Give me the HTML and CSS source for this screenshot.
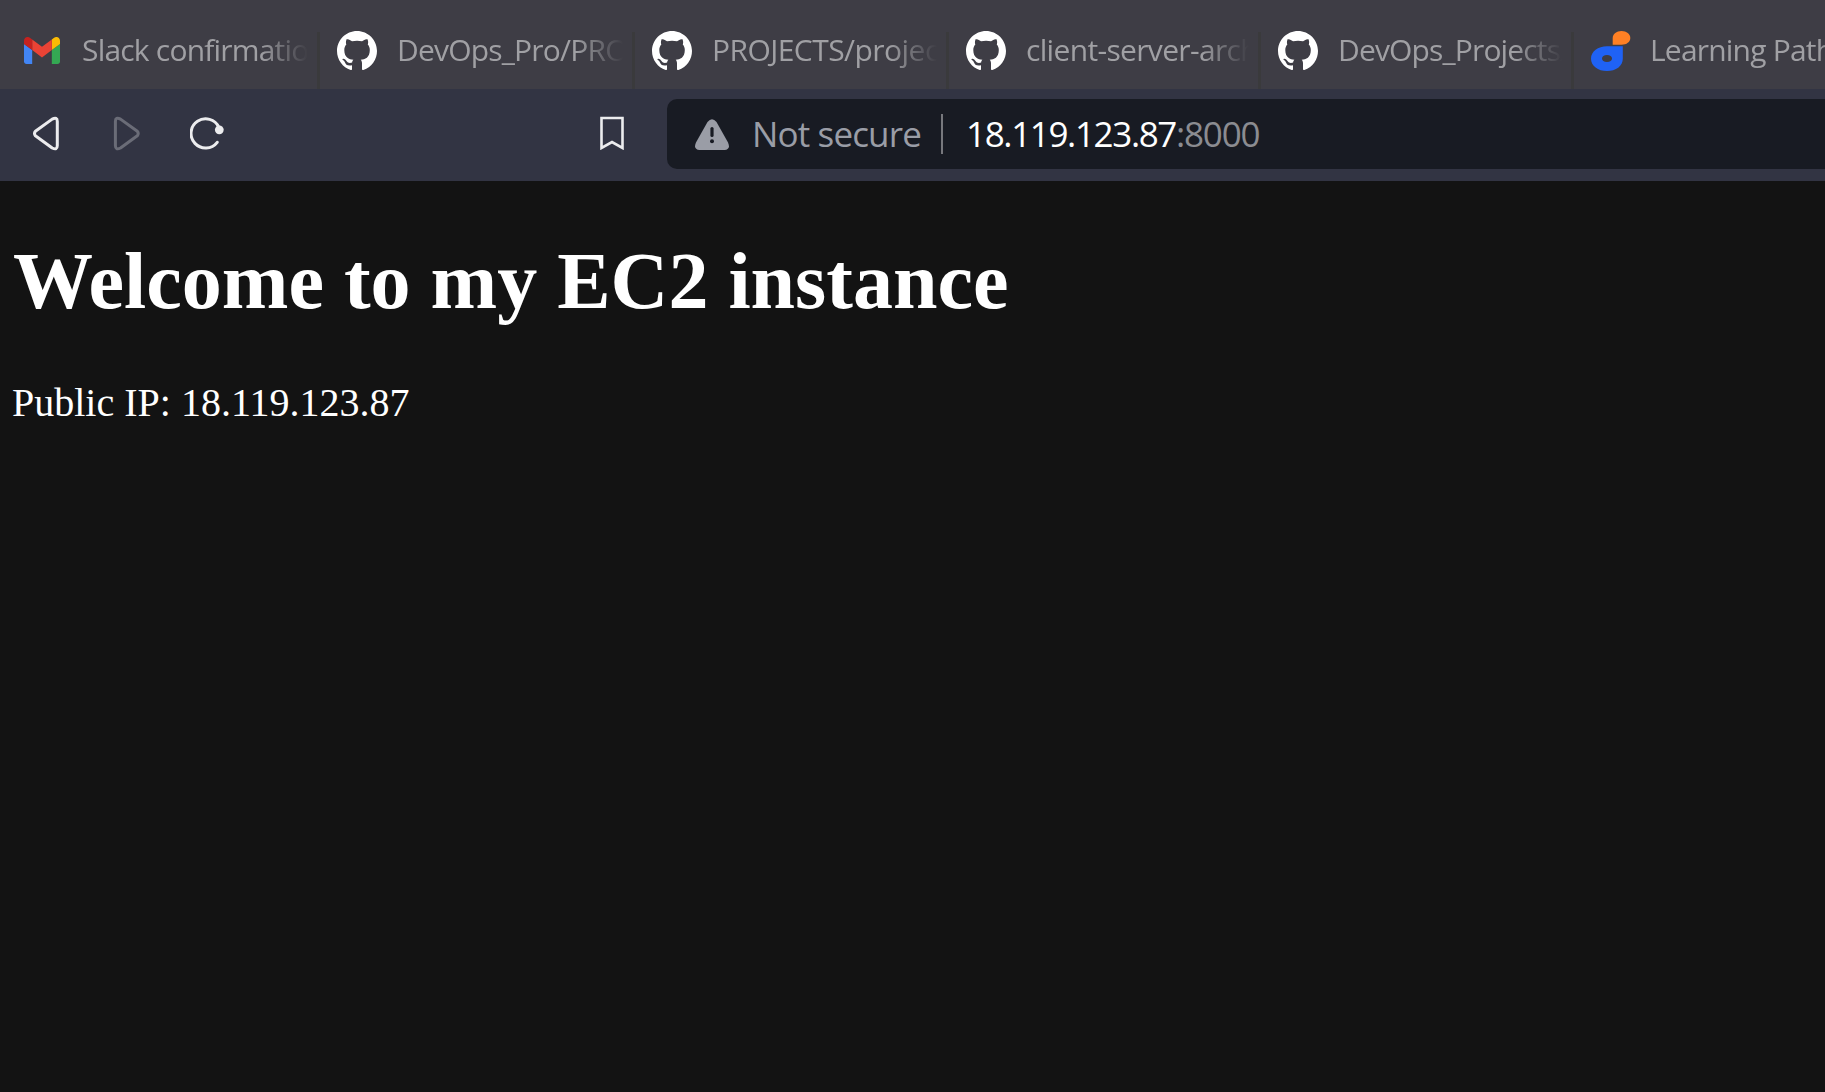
FILE: index.html
```html
<!DOCTYPE html>
<html lang="en">
<head>
<meta charset="utf-8">
<title>Welcome to my EC2 instance</title>
<link rel="stylesheet" href="styles.css">
</head>
<body>
<svg class="defs" aria-hidden="true">
  <symbol id="github" viewBox="0 0 16 16"><path fill="#fff" d="M8 0C3.58 0 0 3.58 0 8c0 3.54 2.29 6.53 5.47 7.59.4.07.55-.17.55-.38 0-.19-.01-.82-.01-1.490-2.010.37-2.530-.49-2.690-.94-.09-.23-.48-.94-.82-1.130-.28-.15-.68-.52-.01-.53.63-.01 1.080.58 1.230.82.72 1.210 1.870.87 2.330.66.07-.52.28-.87.51-1.070-1.780-.2-3.640-.89-3.640-3.950 0-.87.31-1.590.82-2.150-.08-.2-.36-1.020.08-2.120 0 0 .67-.21 2.200.82.64-.18 1.320-.27 2-.27s1.360.09 2 .27c1.530-1.040 2.200-.82 2.200-.82.44 1.100.16 1.920.08 2.120.51.56.82 1.270.82 2.150 0 3.070-1.870 3.750-3.650 3.950.29.25.54.73.54 1.480 0 1.070-.01 1.930-.01 2.200 0 .21.15.46.55.38A8.010 8.010 0 0 0 16 8c0-4.420-3.580-8-8-8z"/></symbol>
</svg>
<div class="browser">
  <nav class="tabs">
    <div class="tab tab-mail">
      <svg class="mail-icon" viewBox="52 42 88 66"><path fill="#4285f4" d="M58 108h14V74L52 59v43c0 3.320 2.690 6 6 6"/><path fill="#34a853" d="M120 108h14c3.320 0 6-2.690 6-6V59l-20 15"/><path fill="#fbbc04" d="M120 48v26l20-15v-8c0-7.420-8.470-11.650-14.400-7.200"/><path fill="#ea4335" d="M72 74V48l24 18 24-18v26L96 92"/><path fill="#c5221f" d="M52 51v8l20 15V48l-5.600-4.200c-5.940-4.450-14.400-.22-14.400 7.200"/></svg>
      <span class="tab-title">Slack confirmatio</span>
    </div>
    <div class="tab tab-pro"><svg class="tab-icon"><use href="#github"/></svg><span class="tab-title">DevOps_Pro/PRO</span></div>
    <div class="tab tab-projects"><svg class="tab-icon"><use href="#github"/></svg><span class="tab-title">PROJECTS/projec</span></div>
    <div class="tab tab-client"><svg class="tab-icon"><use href="#github"/></svg><span class="tab-title">client-server-arch</span></div>
    <div class="tab tab-devops"><svg class="tab-icon"><use href="#github"/></svg><span class="tab-title">DevOps_Projects/</span></div>
    <div class="tab tab-learning">
      <svg class="tab-icon" viewBox="0 0 40 40"><path fill="#ff8024" d="M21.700 13.700V7C21.700 3 25.500 0 30.500 0S39.300 3 39.300 7s-3.800 6.700-8.800 6.700z"/><path fill="#1f62f5" fill-rule="evenodd" d="M31.800 15.300H16C7 15.300 0 20.500 0 27.700S7 40 16 40s15.800-5 15.800-12.300zM16 24c3 0 5 1.500 5 3.500S19 31 16 31s-5-1.500-5-3.500 2-3.500 5-3.500z"/></svg>
      <span class="tab-title">Learning Path</span>
    </div>
  </nav>
  <div class="toolbar">
    <div class="nav-buttons">
      <svg class="nav-icon" viewBox="0 0 30 36"><path class="line" d="M20.200 3.100 3.400 15.200Q1.600 17.400 3.400 19.800L20.200 32Q25.300 34.600 25.300 29.500V5.500Q25.300.5 20.200 3.100z"/></svg>
      <svg class="nav-icon forward" viewBox="0 0 30 36"><path class="line" d="M8.500 3.100 25.300 15.200Q27.100 17.400 25.300 19.800L8.500 32Q3.400 34.600 3.400 29.500V5.500Q3.400.5 8.500 3.100z"/></svg>
      <svg class="reload-icon" viewBox="0 0 36 36"><path class="line" d="M28.900 12.300A14.600 14.600 0 1 0 27.200 27.300"/><circle cx="29.300" cy="14.800" r="4.400" fill="#ececee"/></svg>
    </div>
    <svg class="bookmark" viewBox="0 0 24 34"><path class="line" d="M1.500 2h21v30L12 26 1.500 32z"/></svg>
    <div class="address">
      <svg class="warning" viewBox="0 0 34 31"><path fill="#9a9da6" d="M12.500 3Q17-2.600 21.500 3L33 23.500Q36 30.300 29.500 31h-25Q-2 30.300 1 23.500z"/><path d="M17 9.500v7" stroke="#181b23" stroke-width="3.200" stroke-linecap="round"/><circle cx="17" cy="22.200" r="2" fill="#181b23"/></svg>
      <span class="status">Not secure</span>
      <span class="divider"></span>
      <span class="url">18.119.123.87<span class="port">:8000</span></span>
    </div>
  </div>
  <main class="page"><h1>Welcome to my EC2 instance</h1><p>Public IP: 18.119.123.87</p></main>
</div>
</body>
</html>
```
FILE: styles.css
```css
* { box-sizing: border-box; }
body { margin: 0; background: #131313; color: #fff; }
.defs { display: none; }
svg { display: block; flex: none; }
.browser { height: 1092px; overflow: hidden; }

.tabs {
  display: flex;
  height: 89px;
  padding-top: 32px;
  background: #3e3d45;
  font: 30px/40px "Open Sans", "Noto Sans", sans-serif;
  letter-spacing: -0.8px;
  color: #a0a0a4;
  overflow: hidden;
}
.tab {
  display: flex;
  flex: none;
  gap: 20px;
  width: 314px;
  height: 57px;
  padding: 0 9px 0 17px;
  border-right: 3px solid #3a3a3c;
}
.tab-icon { width: 40px; height: 40px; margin-top: -1px; }
.mail-icon { width: 36px; height: 27px; margin-top: 5px; }
.tab-title {
  flex: 1;
  min-width: 0;
  margin-top: -2px;
  overflow: hidden;
  white-space: nowrap;
  -webkit-mask-image: linear-gradient(to left, transparent, #000 48px);
  mask-image: linear-gradient(to left, transparent, #000 48px);
}
.tab-mail { width: 320px; padding-left: 24px; gap: 22px; letter-spacing: -0.8px; }
.tab-pro { width: 315px; }
.tab-projects { letter-spacing: -0.55px; }
.tab-client { width: 312px; letter-spacing: -0.67px; }
.tab-devops { width: 313px; letter-spacing: -0.85px; }
.tab-learning { width: 300px; border: 0; gap: 19px; }

.toolbar {
  display: flex;
  height: 92px;
  padding-top: 10px;
  background: #323443;
}
.nav-buttons { display: flex; width: 600px; padding: 17px 0 0 32px; }
.nav-icon { width: 30px; height: 36px; }
.forward { margin-left: 50px; opacity: 0.3; }
.reload-icon { width: 36px; height: 36px; margin: -1px 0 0 48px; }
.line { fill: none; stroke: #ececee; stroke-width: 3; stroke-linecap: round; stroke-linejoin: round; }
.bookmark { width: 24px; height: 34px; margin-top: 17px; }
.bookmark .line { stroke-linejoin: miter; stroke-width: 2.6; }
.address {
  display: flex;
  flex: 1;
  height: 70px;
  margin-left: 43px;
  padding-left: 28px;
  border-radius: 10px 0 0 10px;
  background: #181b23;
  font: 35px/70px "Open Sans", "Noto Sans", sans-serif;
  white-space: nowrap;
}
.warning { width: 34px; height: 31px; margin-top: 20px; }
.status { width: 188px; margin-left: 23px; color: #9a9da6; letter-spacing: -0.85px; }
.divider { width: 2px; height: 40px; margin: 15px 23px 0 1px; background: #77787d; }
.url { letter-spacing: -1.36px; }
.port { color: #8b8c91; letter-spacing: -1.2px; }

.page { padding: 54px 12px; font: 40px/46px "Liberation Serif", "Times New Roman", serif; }
.page h1 { margin: 0 0 0 1px; font-size: 80px; line-height: 92px; }
.page p { margin: 53px 0 0; }
```
